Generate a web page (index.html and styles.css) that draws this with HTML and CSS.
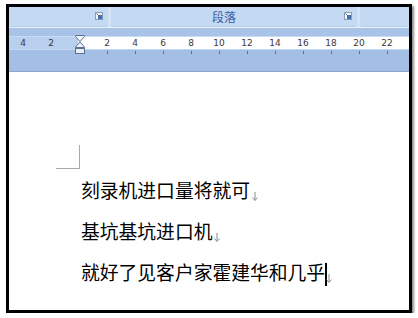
FILE: index.html
```html
<!DOCTYPE html>
<html>
<head>
<meta charset="utf-8">
<link rel="stylesheet" href="styles.css">
</head>
<body>
<div class="frame">
  <div class="ribbon">
    <div class="group g1">
      <span class="launcher"><svg width="8" height="8" viewBox="0 0 8 8"><rect x="0.5" y="0.5" width="7" height="7" fill="#f4f7fb" stroke="#8c9bb0"/><rect x="3" y="3" width="4" height="4" fill="#3f6fb5"/><path d="M1.5 1.5 L4.5 4.5" stroke="#5b6f8c" stroke-width="1"/></svg></span>
    </div>
    <div class="group g2">
      <span class="glabel">段落</span>
      <span class="launcher"><svg width="8" height="8" viewBox="0 0 8 8"><rect x="0.5" y="0.5" width="7" height="7" fill="#f4f7fb" stroke="#8c9bb0"/><rect x="3" y="3" width="4" height="4" fill="#3f6fb5"/><path d="M1.5 1.5 L4.5 4.5" stroke="#5b6f8c" stroke-width="1"/></svg></span>
    </div>
    <div class="group g3"></div>
  </div>
  <div class="band"></div>
  <div class="ruler">
    <div class="scale">
      <span class="num neg">4</span><span class="num neg">2</span><span class="num zero"></span><span class="num">2</span><span class="num">4</span><span class="num">6</span><span class="num">8</span><span class="num">10</span><span class="num">12</span><span class="num">14</span><span class="num">16</span><span class="num">18</span><span class="num">20</span><span class="num">22</span>
    </div>
    <div class="indent"><svg width="10" height="19" viewBox="0 0 10 19"><path d="M0.5 0.5 H9.5 V1.5 L5 6.5 L0.5 1.5 Z" fill="#f2f5fa" stroke="#5b7192"/><path d="M5 7 L9.5 12 V12.5 H0.5 V12 Z" fill="#f2f5fa" stroke="#5b7192"/><rect x="0.5" y="13.5" width="9" height="5" fill="#e9eef6" stroke="#5b7192"/></svg></div>
  </div>
  <div class="under"></div>
  <div class="doc">
    <div class="corner"></div>
    <p class="para">刻录机进口量将就可<span class="pm"><svg width="6" height="9" viewBox="0 0 6 9"><path d="M3 0 V8 M0.5 5.5 L3 8.5 L5.5 5.5" fill="none" stroke="#8a8a8a" stroke-width="1"/></svg></span></p>
    <p class="para">基坑基坑进口机<span class="pm"><svg width="6" height="9" viewBox="0 0 6 9"><path d="M3 0 V8 M0.5 5.5 L3 8.5 L5.5 5.5" fill="none" stroke="#8a8a8a" stroke-width="1"/></svg></span></p>
    <p class="para">就好了见客户家霍建华和几乎<span class="caret"></span><span class="pm"><svg width="6" height="9" viewBox="0 0 6 9"><path d="M3 0 V8 M0.5 5.5 L3 8.5 L5.5 5.5" fill="none" stroke="#8a8a8a" stroke-width="1"/></svg></span></p>
  </div>
</div>
</body>
</html>
```

FILE: styles.css
```css
html, body {
  margin: 0;
  padding: 0;
  background: #ffffff;
}
.frame {
  margin: 4px 0 0 6px;
  width: 400px;
  height: 303px;
  border: 3px solid #000;
  box-shadow: 2px 2px 2px rgba(0,0,0,0.45);
  overflow: hidden;
  display: flex;
  flex-direction: column;
  background: #fff;
}
.ribbon {
  height: 20px;
  display: flex;
  gap: 3px;
  background: #d2e2f5;
  border-bottom: 1px solid #e6f0fb;
}
.group {
  position: relative;
  background: #c4d9f2;
  border-bottom: 1px solid #b8cfec;
  border-radius: 0 0 3px 3px;
}
.g1 { width: 99px; }
.g2 { width: 246px; display: flex; justify-content: center; }
.g3 { flex: 1; }
.glabel {
  font-family: "Noto Sans CJK SC", sans-serif;
  font-size: 12px;
  line-height: 20px;
  color: #3e5fa6;
  margin-right: 20px;
}
.launcher {
  position: absolute;
  right: 5px;
  top: 5px;
  width: 8px;
  height: 8px;
  line-height: 0;
}
.band {
  height: 8px;
  background: #a8c3e7;
  border-bottom: 1px solid #c9dbf2;
}
.ruler {
  position: relative;
  height: 12px;
  background: linear-gradient(to right, #b8cfee 0, #b8cfee 69px, #ffffff 69px);
  border-bottom: 1px solid #c3d6ef;
}
.scale {
  display: flex;
  height: 12px;
}
.num {
  position: relative;
  width: 28px;
  flex: none;
  text-align: center;
  font-family: "DejaVu Sans", sans-serif;
  font-size: 9px;
  line-height: 12px;
  color: #3a3a3a;
}
.num::after {
  content: "";
  position: absolute;
  left: 14px;
  top: 14px;
  width: 1px;
  height: 3px;
  background: #6b6b6b;
}
.num.neg::after, .num.zero::after { display: none; }
.indent {
  position: absolute;
  left: 66px;
  top: -2px;
  width: 10px;
  height: 19px;
  line-height: 0;
}
.under {
  height: 21px;
  background: #a3bfe6;
  border-bottom: 1px solid #8ea8cc;
}
.doc {
  flex: 1;
  background: #fff;
  padding-left: 72px;
}
.corner {
  width: 23px;
  height: 23px;
  margin: 73px 0 0 -25px;
  border-right: 1px solid #a8a8a8;
  border-bottom: 1px solid #a8a8a8;
}
.para {
  margin: 0;
  font-family: "Noto Sans CJK SC", sans-serif;
  font-size: 18.8px;
  line-height: 41px;
  color: #000;
  white-space: nowrap;
}
.pm {
  display: inline-block;
  width: 6px;
  height: 9px;
  margin-left: 2px;
  line-height: 0;
  vertical-align: -3px;
}
.caret {
  display: inline-block;
  width: 2px;
  height: 23px;
  background: #000;
  vertical-align: -6px;
  margin-right: -3px;
}
```
